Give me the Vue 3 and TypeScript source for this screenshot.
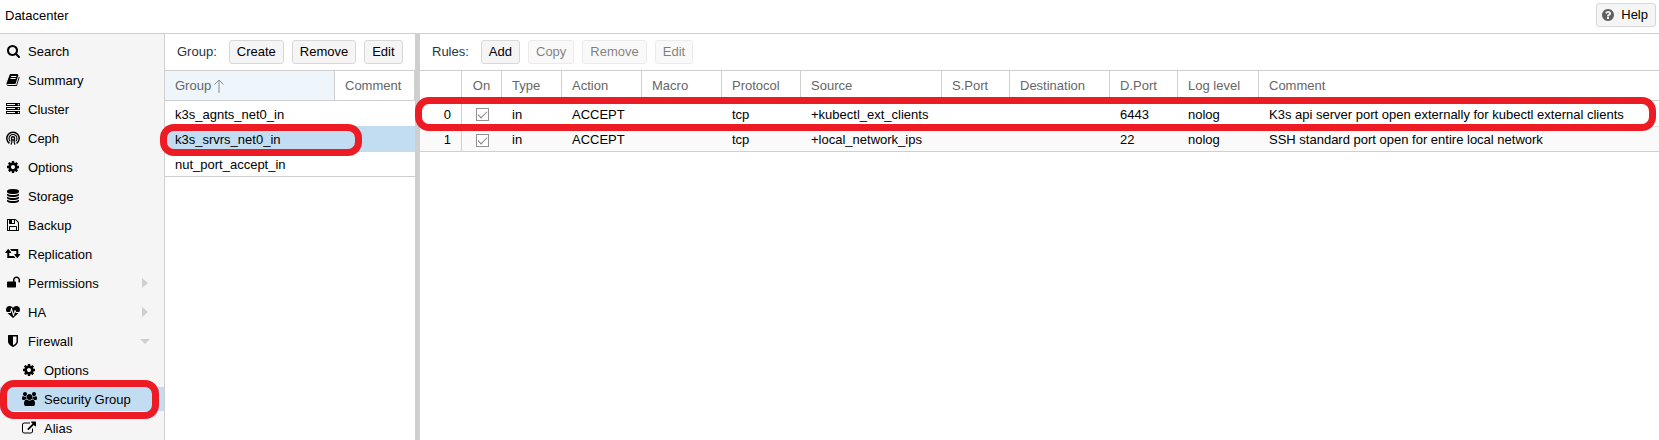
<script setup lang="ts">
import { ref } from 'vue'

interface Icon { box: string; width: number; path: string }
interface NavItem { label: string; icon: string; sub?: boolean; arrow?: 'closed' | 'open'; selected?: boolean }
interface Rule {
  on: boolean; type: string; action: string; macro: string; protocol: string; source: string
  sport: string; destination: string; dport: string; log: string; comment: string
}

const icons: Record<string, Icon> = {
  search: { box: '64 128 1664 1664', width: 13, path: 'M1216 832q0-185-131.5-316.5t-316.5-131.5-316.5 131.5-131.5 316.5 131.5 316.5 316.5 131.5 316.5-131.5 131.5-316.5zm512 832q0 52-38 90t-90 38q-54 0-90-38l-343-342q-179 124-399 124-143 0-273.5-55.5t-225-150-150-225-55.5-273.5 55.5-273.5 150-225 225-150 273.5-55.5 273.5 55.5 225 150 150 225 55.5 273.5q0 220-124 399l343 343q37 37 37 90z' },
  book: { box: '0 0 1792 1792', width: 14, path: 'M1703 478q40 57 18 129l-275 906q-19 64-76.5 107.5t-122.5 43.5h-923q-77 0-148.5-53.5t-99.5-131.5q-24-67-2-127 0-4 3-27t4-37q1-8-3-21.5t-3-19.5q2-11 8-21t16.5-23.5 16.5-23.5q23-38 45-91.5t30-91.5q3-10 .5-30t-.5-28q3-11 17-28t17-23q21-36 42-92t25-90q1-9-2.5-32t.5-28q4-13 22-30.5t22-22.5q19-26 42.5-84.5t27.5-96.5q1-8-3-25.5t-2-26.5q2-8 9-18t18-23 17-21q8-12 16.5-30.5t15-35 16-36 19.5-32 26.5-23.5 36-11.5 47.5 5.5l-1 3q38-9 51-9h761q74 0 114 56t18 130l-274 906q-36 119-71.5 153.5t-128.5 34.5h-869q-27 0-38 15-11 16-1 43 24 70 144 70h923q29 0 56-15.5t35-41.5l300-987q7-22 5-57 38 15 59 43zm-1064 2q-4 13 2 22.5t20 9.5h608q13 0 25.5-9.5t16.5-22.5l21-64q4-13-2-22.5t-20-9.5h-608q-13 0-25.5 9.5t-16.5 22.5zm-83 256q-4 13 2 22.5t20 9.5h608q13 0 25.5-9.5t16.5-22.5l21-64q4-13-2-22.5t-20-9.5h-608q-13 0-25.5 9.5t-16.5 22.5z' },
  server: { box: '0 0 1792 1792', width: 14, path: 'M128 1408h1024v-128h-1024v128zm0-512h1024v-128h-1024v128zm1568 448q0-40-28-68t-68-28-68 28-28 68 28 68 68 28 68-28 28-68zm-1568-960h1024v-128h-1024v128zm1568 448q0-40-28-68t-68-28-68 28-28 68 28 68 68 28 68-28 28-68zm0-512q0-40-28-68t-68-28-68 28-28 68 28 68 68 28 68-28 28-68zm96 832v384h-1792v-384h1792zm0-512v384h-1792v-384h1792zm0-512v384h-1792v-384h1792z' },
  cog: { box: '0 0 1792 1792', width: 14, path: 'M1152 896q0-106-75-181t-181-75-181 75-75 181 75 181 181 75 181-75 75-181zm512-109v222q0 12-8 23t-20 13l-185 28q-19 54-39 91 35 50 107 138 10 12 10 25t-9 23q-27 37-99 108t-94 71q-12 0-26-9l-138-108q-44 23-91 38-16 136-29 186-7 28-36 28h-222q-14 0-24.5-8.5t-11.5-21.5l-28-184q-49-16-90-37l-141 107q-10 9-25 9-14 0-25-11-126-114-165-168-7-10-7-23 0-12 8-23 15-21 51-66.5t54-70.5q-27-50-41-99l-183-27q-13-2-21-12.5t-8-23.5v-222q0-12 8-23t19-13l186-28q14-46 39-92-40-57-107-138-10-12-10-24 0-10 9-23 26-36 98.5-107.5t94.5-71.5q13 0 26 10l138 107q44-23 91-38 16-136 29-186 7-28 36-28h222q14 0 24.5 8.5t11.5 21.5l28 184q49 16 90 37l142-107q9-9 24-9 13 0 25 10 129 119 165 170 7 8 7 22 0 12-8 23-15 21-51 66.5t-54 70.5q26 50 41 98l183 28q13 2 21 12.5t8 23.5z' },
  database: { box: '0 0 1792 1792', width: 14, path: 'M896 768q237 0 443-43t325-127v170q0 69-103 128t-280 93.5-385 34.5-385-34.5-280-93.5-103-128v-170q119 84 325 127t443 43zm0 768q237 0 443-43t325-127v170q0 69-103 128t-280 93.5-385 34.5-385-34.5-280-93.5-103-128v-170q119 84 325 127t443 43zm0-384q237 0 443-43t325-127v170q0 69-103 128t-280 93.5-385 34.5-385-34.5-280-93.5-103-128v-170q119 84 325 127t443 43zm0-1152q208 0 385 34.5t280 93.5 103 128v128q0 69-103 128t-280 93.5-385 34.5-385-34.5-280-93.5-103-128v-128q0-69 103-128t280-93.5 385-34.5z' },
  floppy: { box: '0 0 1792 1792', width: 14, path: 'M512 1536h768v-384h-768v384zm896 0h128v-896q0-14-10-38.5t-20-34.5l-281-281q-10-10-34-20t-39-10v416q0 40-28 68t-68 28h-576q-40 0-68-28t-28-68v-416h-128v1280h128v-416q0-40 28-68t68-28h832q40 0 68 28t28 68v416zm-384-928v-320q0-13-9.5-22.5t-22.5-9.5h-192q-13 0-22.5 9.5t-9.5 22.5v320q0 13 9.5 22.5t22.5 9.5h192q13 0 22.5-9.5t9.5-22.5zm640 32v928q0 40-28 68t-68 28h-1344q-40 0-68-28t-28-68v-1344q0-40 28-68t68-28h928q40 0 88 20t76 48l280 280q28 28 48 76t20 88z' },
  retweet: { box: '32 128 2048 1792', width: 16, path: 'M1344 1504q0 13-9.5 22.5t-22.5 9.5h-960q-8 0-13.5-2t-9-7-5.5-8-3-11.5-1-11.5v-600h-192q-26 0-45-19t-19-45q0-24 15-41l320-384q19-22 49-22t49 22l320 384q15 17 15 41 0 26-19 45t-45 19h-192v384h576q16 0 25 11l160 192q7 10 7 21zm640-416q0 24-15 41l-320 384q-20 23-49 23t-49-23l-320-384q-15-17-15-41 0-26 19-45t45-19h192v-384h-576q-16 0-25-12l-160-192q-7-9-7-20 0-13 9.5-22.5t22.5-9.5h960q8 0 13.5 2t9 7 5.5 8 3 11.5 1 11.5v600h192q26 0 45 19t19 45z' },
  unlock: { box: '64 64 1664 1792', width: 13, path: 'M1728 576v256q0 26-19 45t-45 19h-64q-26 0-45-19t-19-45v-256q0-106-75-181t-181-75-181 75-75 181v192h96q40 0 68 28t28 68v576q0 40-28 68t-68 28h-960q-40 0-68-28t-28-68v-576q0-40 28-68t68-28h672v-192q0-185 131.5-316.5t316.5-131.5 316.5 131.5 131.5 316.5z' },
  heartbeat: { box: '0 0 1792 1792', width: 14, path: 'M1280 1024h305q-5 6-10 10.5t-9 7.5l-3 4-623 600q-18 18-44 18t-44-18l-624-602q-5-2-21-20h369q22 0 39.5-13.5t22.5-34.5l70-281 190 667q6 20 23 33t39 13q21 0 38-13t23-33l146-485 56 112q18 35 57 35zm512-428q0 145-103 300h-369l-111-221q-8-17-25.5-27t-36.5-8q-45 5-56 46l-129 430-196-686q-6-20-23.5-33t-39.5-13-39 13.5-22 34.5l-116 464h-423q-103-155-103-300 0-220 127-344t351-124q62 0 126.5 21.5t120 58 95.5 68.5 76 68q36-36 76-68t95.5-68.5 120-58 126.5-21.5q224 0 351 124t127 344z' },
  shield: { box: '0 0 1792 1792', width: 14, path: 'M1344 960v-640h-448v1137q119-63 213-137 235-184 235-360zm192-768v768q0 86-33.5 170.5t-83 150-118 127.5-126.5 103-121 77.5-89.5 49.5-42.5 20q-12 6-26 6t-26-6q-16-7-42.5-20t-89.5-49.5-121-77.5-126.5-103-118-127.5-83-150-33.5-170.5v-768q0-26 19-45t45-19h1152q26 0 45 19t19 45z' },
  users: { box: '0 0 1920 1792', width: 15, path: 'M593 896q-162 5-265 128h-134q-82 0-138-40.5t-56-118.5q0-353 124-353 6 0 43.5 21t97.5 42.5 119 21.5q67 0 133-23-5 37-5 66 0 139 81 256zm1071 637q0 120-73 189.5t-194 69.5h-874q-121 0-194-69.5t-73-189.5q0-53 3.5-103.5t14-109 26.5-108.5 43-97.5 62-81 85.5-53.5 111.5-20q10 0 43 21.5t73 48 107 48 135 21.5 135-21.5 107-48 73-48 43-21.5q61 0 111.5 20t85.5 53.5 62 81 43 97.5 26.5 108.5 14 109 3.5 103.5zm-1024-1277q0 106-75 181t-181 75-181-75-75-181 75-181 181-75 181 75 75 181zm704 384q0 159-112.5 271.5t-271.5 112.5-271.5-112.5-112.5-271.5 112.5-271.5 271.5-112.5 271.5 112.5 112.5 271.5zm576 225q0 78-56 118.5t-138 40.5h-134q-103-123-265-128 81-117 81-256 0-29-5-66 66 23 133 23 59 0 119-21.5t97.5-42.5 43.5-21q124 0 124 353zm-128-609q0 106-75 181t-181 75-181-75-75-181 75-181 181-75 181 75 75 181z' },
  external: { box: '0 -64 1792 1792', width: 14, path: 'M1408 928v320q0 119-84.5 203.5t-203.5 84.5h-832q-119 0-203.5-84.5t-84.5-203.5v-832q0-119 84.5-203.5t203.5-84.5h704q14 0 23 9t9 23v64q0 14-9 23t-23 9h-704q-66 0-113 47t-47 113v832q0 66 47 113t113 47h832q66 0 113-47t47-113v-320q0-14 9-23t23-9h64q14 0 23 9t9 23zm384-864v512q0 26-19 45t-45 19-45-19l-176-176-652 652q-10 10-23 10t-23-10l-114-114q-10-10-10-23t10-23l652-652-176-176q-19-19-19-45t19-45 45-19h512q26 0 45 19t19 45z' },
}

const nav: NavItem[] = [
  { label: 'Search', icon: 'search' },
  { label: 'Summary', icon: 'book' },
  { label: 'Cluster', icon: 'server' },
  { label: 'Ceph', icon: 'ceph' },
  { label: 'Options', icon: 'cog' },
  { label: 'Storage', icon: 'database' },
  { label: 'Backup', icon: 'floppy' },
  { label: 'Replication', icon: 'retweet' },
  { label: 'Permissions', icon: 'unlock', arrow: 'closed' },
  { label: 'HA', icon: 'heartbeat', arrow: 'closed' },
  { label: 'Firewall', icon: 'shield', arrow: 'open' },
  { label: 'Options', icon: 'cog', sub: true },
  { label: 'Security Group', icon: 'users', sub: true, selected: true },
  { label: 'Alias', icon: 'external', sub: true },
]

const groups = ['k3s_agnts_net0_in', 'k3s_srvrs_net0_in', 'nut_port_accept_in']
const selectedGroup = ref('k3s_srvrs_net0_in')

const ruleButtons = [
  { label: 'Add', disabled: false },
  { label: 'Copy', disabled: true },
  { label: 'Remove', disabled: true },
  { label: 'Edit', disabled: true },
]

const rules: Rule[] = [
  { on: true, type: 'in', action: 'ACCEPT', macro: '', protocol: 'tcp', source: '+kubectl_ext_clients', sport: '', destination: '', dport: '6443', log: 'nolog', comment: 'K3s api server port open externally for kubectl external clients' },
  { on: true, type: 'in', action: 'ACCEPT', macro: '', protocol: 'tcp', source: '+local_network_ips', sport: '', destination: '', dport: '22', log: 'nolog', comment: 'SSH standard port open for entire local network' },
]
</script>

<template>
  <div class="app">
    <header class="titlebar">
      <span>Datacenter</span>
      <button type="button" class="btn help">
        <svg class="help-icon" viewBox="128 128 1536 1536" aria-hidden="true">
          <path d="M1024 1376v-192q0-14-9-23t-23-9h-192q-14 0-23 9t-9 23v192q0 14 9 23t23 9h192q14 0 23-9t9-23zm256-672q0-88-55.5-163t-138.5-116-170-41q-243 0-371 213-15 24 8 42l132 100q7 6 19 6 16 0 25-12 53-68 86-92 34-24 86-24 48 0 85.5 26t37.5 59q0 38-20 61t-68 45q-63 28-115.5 86.5t-52.5 125.5v36q0 14 9 23t23 9h192q14 0 23-9t9-23q0-19 21.5-49.5t54.5-49.5q32-18 49-28.5t46-35 44.5-48 28-60.5 12.5-81zm384 192q0 209-103 385.5t-279.5 279.5-385.5 103-385.5-103-279.5-279.5-103-385.5 103-385.5 279.5-279.5 385.5-103 385.5 103 279.5 279.5 103 385.5z" />
        </svg>
        Help
      </button>
    </header>

    <div class="body">
      <nav class="sidebar">
        <a
          v-for="(item, i) in nav"
          :key="i"
          href="#"
          class="nav-item"
          :class="{ sub: item.sub, selected: item.selected }"
        >
          <span class="nav-icon">
            <svg v-if="item.icon === 'ceph'" width="14" height="14" viewBox="0 0 14 14" aria-hidden="true">
              <g fill="none" stroke="currentColor">
                <path d="M3.4 12.4A6.2 6.2 0 1 1 10.6 12.4" stroke-width="1.5" />
                <path d="M4.3 10.4A4 4 0 1 1 9.7 10.4" stroke-width="1.1" />
                <path d="M5.8 9V11.4L5 13.6M8.2 9V11.4L9 13.6" stroke-width="1.2" />
              </g>
              <circle cx="7" cy="7.4" r="1.6" fill="none" stroke="currentColor" stroke-width="1.4" />
            </svg>
            <svg v-else :width="icons[item.icon].width" :height="item.icon === 'search' ? 13 : 14" :viewBox="icons[item.icon].box" aria-hidden="true">
              <path :d="icons[item.icon].path" fill="currentColor" />
            </svg>
          </span>
          <span class="nav-label">{{ item.label }}</span>
          <span v-if="item.arrow" class="expander" :class="item.arrow"></span>
          <span v-if="item.selected" class="mark mark-nav"></span>
        </a>
      </nav>

      <section class="groups">
        <div class="toolbar">
          <span class="caption">Group:</span>
          <button type="button" class="btn">Create</button>
          <button type="button" class="btn">Remove</button>
          <button type="button" class="btn">Edit</button>
        </div>
        <table class="grid">
          <colgroup><col class="w-group"><col></colgroup>
          <thead>
            <tr>
              <th class="sorted">
                <span class="sort">Group
                  <svg width="10" height="14" viewBox="0 0 10 14" aria-hidden="true"><path d="M5 14V1M.5 5.5L5 1l4.5 4.5" fill="none" stroke="#8c8c8c" /></svg>
                </span>
              </th>
              <th>Comment</th>
            </tr>
          </thead>
          <tbody>
            <tr v-for="g in groups" :key="g" :class="{ selected: g === selectedGroup }" @click="selectedGroup = g">
              <td>{{ g }}</td>
              <td></td>
            </tr>
          </tbody>
        </table>
        <span class="mark mark-group"></span>
      </section>

      <div class="splitter"></div>

      <section class="rules">
        <div class="toolbar">
          <span class="caption">Rules:</span>
          <button v-for="b in ruleButtons" :key="b.label" type="button" class="btn" :disabled="b.disabled">{{ b.label }}</button>
        </div>
        <table class="grid striped">
          <colgroup>
            <col class="w-num"><col class="w-on"><col class="w-type"><col class="w-action"><col class="w-action">
            <col class="w-proto"><col class="w-source"><col class="w-port"><col class="w-dest"><col class="w-port">
            <col class="w-log"><col>
          </colgroup>
          <thead>
            <tr>
              <th></th><th class="on">On</th><th>Type</th><th>Action</th><th>Macro</th><th>Protocol</th>
              <th>Source</th><th>S.Port</th><th>Destination</th><th>D.Port</th><th>Log level</th><th class="last">Comment</th>
            </tr>
          </thead>
          <tbody>
            <tr v-for="(r, i) in rules" :key="i">
              <td class="num">{{ i }}</td>
              <td class="on"><input type="checkbox" class="check" :checked="r.on" disabled :aria-label="`Rule ${i} enabled`"></td>
              <td>{{ r.type }}</td>
              <td>{{ r.action }}</td>
              <td>{{ r.macro }}</td>
              <td>{{ r.protocol }}</td>
              <td>{{ r.source }}</td>
              <td>{{ r.sport }}</td>
              <td>{{ r.destination }}</td>
              <td>{{ r.dport }}</td>
              <td>{{ r.log }}</td>
              <td>{{ r.comment }}</td>
            </tr>
          </tbody>
        </table>
        <span class="mark mark-rule"></span>
      </section>
    </div>
  </div>
</template>

<style>
body {
  margin: 0;
  background: #fff;
}
</style>

<style scoped>
.app {
  display: flex;
  flex-direction: column;
  height: 100vh;
  overflow: hidden;
  color: #000;
  font: 13px/16px "Liberation Sans", Helvetica, Arial, sans-serif;
}
.titlebar {
  flex: none;
  display: flex;
  align-items: flex-start;
  justify-content: space-between;
  box-sizing: border-box;
  height: 34px;
  padding: 3px 3px 0 5px;
  border-bottom: 1px solid #cfcfcf;
}
.titlebar > span {
  line-height: 26px;
}
.btn {
  box-sizing: border-box;
  height: 24px;
  padding: 0 7px;
  border: 1px solid #d8d8d8;
  border-radius: 3px;
  background: #f5f5f5;
  color: #000;
  font: inherit;
  line-height: 20px;
}
.btn:disabled {
  opacity: 0.5;
}
.help {
  display: flex;
  align-items: center;
  gap: 7px;
  padding: 0 7px 0 5px;
}
.help-icon {
  width: 12px;
  height: 12px;
  fill: #606060;
}
.body {
  flex: 1;
  display: flex;
  min-height: 0;
}
.sidebar {
  flex: none;
  display: flex;
  flex-direction: column;
  gap: 5px;
  box-sizing: border-box;
  width: 165px;
  padding-top: 5px;
  border-right: 1px solid #cfcfcf;
  background: #f5f5f5;
}
.nav-item {
  flex: none;
  position: relative;
  display: flex;
  align-items: center;
  height: 24px;
  padding: 0 14px 0 5px;
  color: #000;
  text-decoration: none;
}
.nav-item.sub {
  padding-left: 21px;
}
.nav-item.selected {
  background: #c2ddf2;
}
.nav-icon {
  flex: none;
  display: flex;
  justify-content: center;
  width: 16px;
  margin-right: 7px;
}
.nav-label {
  flex: 1;
  padding-top: 2px;
  white-space: nowrap;
}
.expander {
  border: 5px solid transparent;
}
.expander.closed {
  border-left: 6px solid #cfcfcf;
  border-right: 0;
  margin-right: 2px;
}
.expander.open {
  border-top: 5px solid #cfcfcf;
  border-bottom: 0;
}
.groups {
  flex: none;
  position: relative;
  width: 250px;
}
.splitter {
  flex: none;
  width: 5px;
  background: #cfcfcf;
}
.rules {
  flex: 1;
  position: relative;
  min-width: 0;
}
.toolbar {
  display: flex;
  align-items: center;
  gap: 8px;
  box-sizing: border-box;
  height: 37px;
  padding: 0 12px;
  border-bottom: 1px solid #cfcfcf;
}
.caption {
  margin-right: 4px;
  color: #27343f;
}
.grid {
  width: 100%;
  table-layout: fixed;
  border-collapse: separate;
  border-spacing: 0;
}
.grid th,
.grid td {
  box-sizing: border-box;
  padding: 0 10px;
  overflow: hidden;
  text-align: left;
  white-space: nowrap;
}
.grid th {
  height: 30px;
  border-right: 1px solid #cfcfcf;
  border-bottom: 1px solid #cfcfcf;
  color: #666;
  font-weight: normal;
}
.grid th.last {
  border-right: 0;
}
.grid th.sorted {
  background: #eef5fb;
}
.sort {
  display: flex;
  align-items: center;
  gap: 3px;
}
.grid td {
  height: 25px;
  padding-top: 2px;
}
.grid tbody tr:nth-child(2) td {
  height: 26px;
}
.grid.striped tbody tr:nth-child(2) td {
  border-top: 1px solid #e0e0e0;
  background: #fafafa;
}
.grid tbody tr:last-child td {
  border-bottom: 1px solid #cfcfcf;
}
.grid tr.selected td {
  background: #c2ddf2;
}
.grid td.num {
  border-right: 1px solid #cfcfcf;
  text-align: right;
}
.grid .on {
  padding-right: 0;
  padding-left: 0;
  text-align: center;
}
.check {
  appearance: none;
  position: relative;
  display: block;
  box-sizing: border-box;
  width: 13px;
  height: 13px;
  margin: 0 auto;
  border: 1px solid #919191;
  background: #fff;
}
.check:checked::after {
  content: "";
  position: absolute;
  top: 2px;
  left: 1px;
  width: 8px;
  height: 4px;
  border-bottom: 1px solid #808080;
  border-left: 1px solid #808080;
  transform: rotate(-45deg);
}
.w-group { width: 170px; }
.w-num { width: 42px; }
.w-on { width: 40px; }
.w-type { width: 60px; }
.w-action { width: 80px; }
.w-proto { width: 79px; }
.w-source { width: 141px; }
.w-port { width: 68px; }
.w-dest { width: 100px; }
.w-log { width: 81px; }

/* Red callouts drawn over the highlighted entries */
.mark {
  position: absolute;
  z-index: 2;
  box-sizing: border-box;
  border: 7px solid #ed1c24;
  border-radius: 14px;
  pointer-events: none;
}
.mark-nav {
  top: -7px;
  bottom: -8px;
  left: 0;
  right: 5px;
}
.mark-group {
  top: 90px;
  left: -5px;
  width: 202px;
  height: 32px;
}
.mark-rule {
  top: 63px;
  left: -5px;
  right: 3px;
  height: 34px;
}
</style>
